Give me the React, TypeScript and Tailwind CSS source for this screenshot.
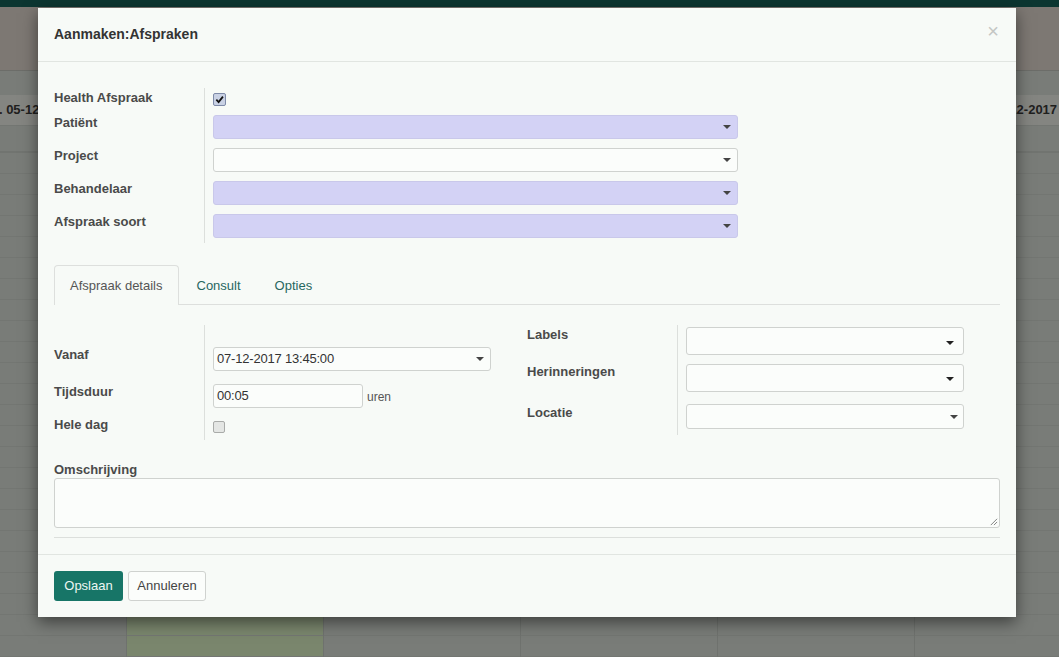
import React from 'react';

const days = ['di. 05-12-2017', 'wo. 06-12-2017', 'do. 07-12-2017', 'vr. 08-12-2017', 'za. 09-12-2017', 'zo. 10-12-2017'];
const slots = Array.from({ length: 24 }, (_, i) => i);

function Caret({ dark }: { dark?: boolean }) {
  return (
    <span
      className={`block w-0 h-0 border-x-[4px] border-x-transparent border-t-[4px] ${dark ? 'border-t-[#222]' : 'border-t-[#444]'}`}
    />
  );
}

function Select({ purple, className, value, pr = 'pr-[6px]', dark }: { purple?: boolean; className: string; value?: string; pr?: string; dark?: boolean }) {
  return (
    <div
      className={`flex items-center justify-between rounded-[3px] border ${pr} ${
        purple ? 'bg-[#d3d2f5] border-[#c9c8ea]' : 'bg-[#fbfdfb] border-[#cfd2cf]'
      } ${className}`}
    >
      <span className="pl-[3px] text-[13px] tracking-[-0.2px] text-[#333]">{value}</span>
      <Caret dark={dark} />
    </div>
  );
}

function Label({ children, className = '' }: { children: React.ReactNode; className?: string }) {
  return <div className={`w-[150px] shrink-0 text-[13px] leading-[16px] font-bold text-[#4a4a4a] ${className}`}>{children}</div>;
}

function Calendar() {
  return (
    <div className="w-[1059px] h-[657px] overflow-hidden bg-[#797c78] flex flex-col">
      <div className="h-[8px] bg-[#0c3631]" />
      <div className="h-[68px] bg-[#7d7873] border-b border-[#6c6d69]" />
      <div className="flex ml-[-70px] flex-1">
        {days.map((d, i) => (
          <div key={d} className={`w-[197px] shrink-0 border-r border-[#6f726e] ${i === 1 ? 'bg-[#7a866d]' : ''}`}>
            <div className="h-[24px]" />
            <div
              className={`h-[31px] bg-[#848581] border-b border-[#737672] flex items-center justify-center text-[13px] font-bold text-[#1f201e] ${
                i === 0 ? 'pl-[4px]' : ''
              }`}
            >
              {d}
            </div>
            <div className="h-[27px] border-b-2 border-[#717470]" />
            {slots.map((s) => (
              <div key={s} className="h-[21px] border-b border-[#737672]" />
            ))}
          </div>
        ))}
      </div>
    </div>
  );
}

export default function App() {
  return (
    <div className="relative w-[1059px] h-[657px] overflow-hidden" style={{ fontFamily: '"Liberation Sans", Arial, sans-serif' }}>
      <Calendar />

      {/* dialoog */}
      <div className="absolute left-[38px] top-[8px] w-[978px] h-[609px] bg-[#f7faf7] shadow-[0_5px_15px_rgba(0,0,0,0.5)] flex flex-col">
        <div className="h-[54px] px-[16px] flex items-center justify-between border-b border-[#e1e5e1]">
          <span className="text-[14px] font-bold text-[#333]">Aanmaken:Afspraken</span>
          <span className="text-[20px] leading-none text-[#c4c6c4] mr-[1px] mt-[-8px]">×</span>
        </div>

        <div className="px-[16px] pt-[26px] pb-[16px] flex-1">
          {/* bovenste groep */}
          <div className="flex flex-col">
            <div className="flex h-[23px]">
              <Label className="pt-[2px]">Health Afspraak</Label>
              <div className="border-l border-[#dcdfdc] pl-[8px] pt-[5px]">
                <div className="w-[13px] h-[13px] rounded-[2px] border border-[#7e8aa8] bg-[#c9d1e4] flex items-center justify-center">
                  <svg viewBox="0 0 10 10" className="w-[9px] h-[9px]">
                    <path d="M1.5 5.2 L4 7.8 L8.8 1.8" fill="none" stroke="#111" strokeWidth="2" />
                  </svg>
                </div>
              </div>
            </div>
            {[
              { l: 'Patiënt', p: true },
              { l: 'Project', p: false },
              { l: 'Behandelaar', p: true },
              { l: 'Afspraak soort', p: true },
            ].map((r) => (
              <div key={r.l} className="flex h-[33px]">
                <Label className="pt-[4px]">{r.l}</Label>
                <div className="border-l border-[#dcdfdc] pl-[8px] pt-[4px]">
                  <Select purple={r.p} className="w-[525px] h-[24px]" />
                </div>
              </div>
            ))}
          </div>

          {/* tabbladen */}
          <div className="mt-[22px] flex border-b border-[#dddfdd] h-[40px]">
            <div className="h-[40px] px-[15px] pt-[1px] flex items-center border border-b-0 border-[#dddfdd] rounded-t-[4px] bg-[#f7faf7] text-[13px] text-[#555] mb-[-1px]">
              Afspraak details
            </div>
            <div className="ml-[2px] h-[39px] px-[16px] pt-[2px] flex items-center text-[13px] text-[#27675f]">Consult</div>
            <div className="ml-[2px] h-[39px] px-[16px] pt-[2px] flex items-center text-[13px] text-[#27675f]">Opties</div>
          </div>

          <div className="grid grid-cols-2 mt-[20px]">
            {/* links */}
            <div className="flex flex-col">
              <div className="flex h-[55px]">
                <Label className="pt-[22px]">Vanaf</Label>
                <div className="border-l border-[#dcdfdc] pl-[8px] pt-[22px]">
                  <Select className="w-[278px] h-[24px]" value="07-12-2017 13:45:00" />
                </div>
              </div>
              <div className="flex h-[33px]">
                <Label className="pt-[4px]">Tijdsduur</Label>
                <div className="border-l border-[#dcdfdc] pl-[8px] pt-[4px] flex items-start">
                  <div className="w-[150px] h-[24px] rounded-[3px] border border-[#cfd2cf] bg-[#fbfdfb] flex items-center pl-[3px] text-[13px] tracking-[-0.2px] text-[#333]">
                    00:05
                  </div>
                  <span className="ml-[4px] mt-[4px] text-[12px] text-[#555]">uren</span>
                </div>
              </div>
              <div className="flex h-[27px]">
                <Label className="pt-[4px]">Hele dag</Label>
                <div className="border-l border-[#dcdfdc] pl-[8px] pt-[8px]">
                  <div className="w-[12px] h-[12px] rounded-[2px] border border-[#a9aba9] bg-[#e4e6e4]" />
                </div>
              </div>
            </div>

            {/* rechts */}
            <div className="flex flex-col">
              <div className="flex h-[35px]">
                <Label className="pt-[2px]">Labels</Label>
                <div className="border-l border-[#dcdfdc] pl-[8px] pt-[2px]">
                  <Select className="w-[278px] h-[28px] items-end pb-[9px]" pr="pr-[9px]" dark />
                </div>
              </div>
              <div className="flex h-[36px]">
                <Label className="pt-[4px]">Herinneringen</Label>
                <div className="border-l border-[#dcdfdc] pl-[8px] pt-[4px]">
                  <Select className="w-[278px] h-[28px] items-end pb-[10px]" pr="pr-[9px]" dark />
                </div>
              </div>
              <div className="flex h-[39px]">
                <Label className="pt-[9px]">Locatie</Label>
                <div className="border-l border-[#dcdfdc] pl-[8px] pt-[8px]">
                  <Select className="w-[278px] h-[25px]" pr="pr-[5px]" />
                </div>
              </div>
            </div>
          </div>

          <div className="mt-[22px] text-[13px] leading-[16px] font-bold text-[#4a4a4a]">Omschrijving</div>
          <div className="h-[50px] rounded-[3px] border border-[#cfd2cf] bg-[#fbfdfb] relative">
            <svg viewBox="0 0 10 10" className="absolute right-[1px] bottom-[1px] w-[9px] h-[9px]">
              <path d="M9 2 L2 9 M9 5.5 L5.5 9" stroke="#777" strokeWidth="1" />
            </svg>
          </div>
          <div className="mt-[9px] border-t border-[#dcdfdc]" />
        </div>

        <div className="border-t border-[#e1e5e1] px-[16px] pt-[16px] pb-[16px] flex gap-[5px]">
          <button className="w-[69px] h-[30px] flex items-center justify-center rounded-[3px] bg-[#177567] text-[13px] text-[#eef6f3]">
            Opslaan
          </button>
          <button className="w-[78px] h-[30px] flex items-center justify-center rounded-[3px] border border-[#cfd2cf] bg-[#fbfdfb] text-[13px] text-[#444]">
            Annuleren
          </button>
        </div>
      </div>
    </div>
  );
}
